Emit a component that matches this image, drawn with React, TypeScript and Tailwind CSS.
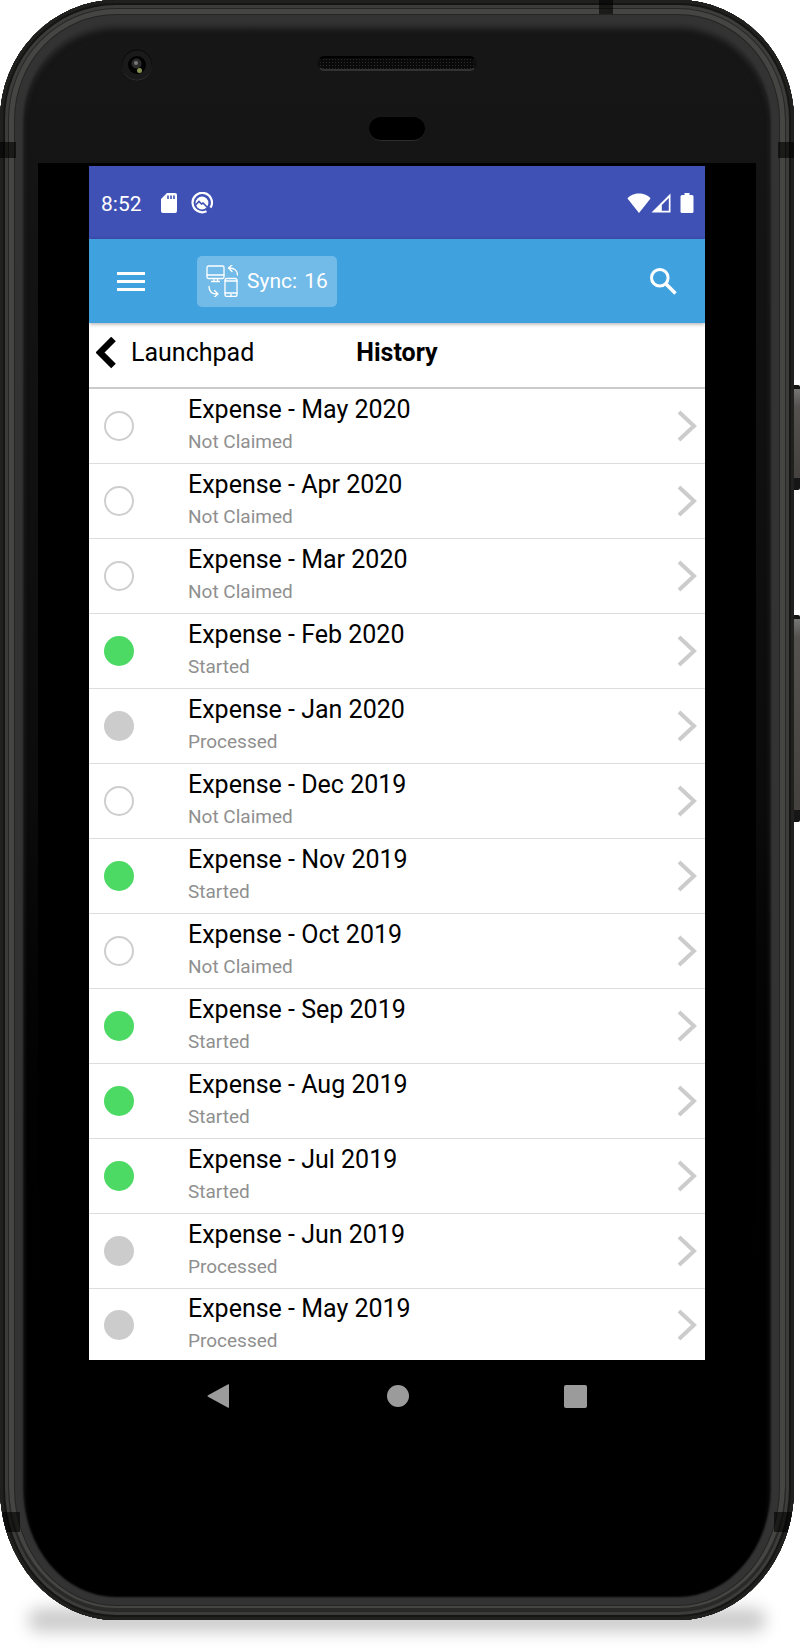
type Status = "Not Claimed" | "Started" | "Processed";

interface Expense {
  month: string;
  status: Status;
}

const expenses: Expense[] = [
  { month: "May 2020", status: "Not Claimed" },
  { month: "Apr 2020", status: "Not Claimed" },
  { month: "Mar 2020", status: "Not Claimed" },
  { month: "Feb 2020", status: "Started" },
  { month: "Jan 2020", status: "Processed" },
  { month: "Dec 2019", status: "Not Claimed" },
  { month: "Nov 2019", status: "Started" },
  { month: "Oct 2019", status: "Not Claimed" },
  { month: "Sep 2019", status: "Started" },
  { month: "Aug 2019", status: "Started" },
  { month: "Jul 2019", status: "Started" },
  { month: "Jun 2019", status: "Processed" },
  { month: "May 2019", status: "Processed" },
];

const dotStyles: Record<Status, string> = {
  "Not Claimed": "border-2 border-[#cecece] bg-white",
  Started: "bg-[#4cd964]",
  Processed: "bg-[#cccccc]",
};

function StatusBar() {
  return (
    <div className="flex h-[73px] items-center bg-[#3f51b5] pr-[11px] pl-3 text-white">
      <span className="pt-0.5 text-[21px] leading-6">8:52</span>
      <svg className="ml-[19px] h-5 w-4" viewBox="0 0 16 20" fill="currentColor">
        <path d="M6 0h8a2 2 0 0 1 2 2v16a2 2 0 0 1-2 2H2a2 2 0 0 1-2-2V6z" />
        <path d="M7 2.500v3.500M10 2.500v3.500M13 2.500v3.500" stroke="#3f51b5" strokeWidth="1.600" />
      </svg>
      <svg className="ml-[14px] size-[22px]" viewBox="0 0 22 22" fill="none">
        <path
          d="M15.500 19.300A9.700 9.700 0 1 1 19.500 15.700"
          stroke="#fff"
          strokeWidth="2.200"
        />
        <circle cx="11" cy="11" r="6.400" fill="#fff" />
        <path
          d="M4 13.500l4-4 2.500 2.500 1.500-1L19 18"
          stroke="#3f51b5"
          strokeWidth="1.600"
        />
      </svg>
      <div className="ml-auto flex items-center">
        <svg className="h-5 w-6" viewBox="0 0 24 20" fill="currentColor">
          <path d="M12 20L0.500 5.500C3 2 7.500 0.500 12 0.500S21 2 23.500 5.500z" />
        </svg>
        <svg className="h-5 w-5" viewBox="0 0 20 20" fill="none">
          <path d="M19.500 0.500v19H0.500z" fill="#fff" />
          <path d="M17.800 5v12.800h-7V12z" fill="#3f51b5" />
        </svg>
        <svg className="ml-[9px] h-5 w-[14px]" viewBox="0 0 14 20" fill="currentColor">
          <path d="M4.500 0h5v2H12a1.500 1.500 0 0 1 1.500 1.500v15A1.500 1.500 0 0 1 12 20H2A1.500 1.500 0 0 1 .5 18.500v-15A1.500 1.500 0 0 1 2 2h2.500z" />
        </svg>
      </div>
    </div>
  );
}

function AppBar() {
  return (
    <header className="relative flex h-[84px] items-center bg-[#40a1df] px-7 text-white shadow-[0_1px_4px_rgba(0,0,0,0.35)]">
      <button aria-label="Menu" className="flex w-7 flex-col gap-[5px]">
        <span className="h-[3px] bg-white" />
        <span className="h-[3px] bg-white" />
        <span className="h-[3px] bg-white" />
      </button>
      <button className="ml-[52px] flex h-[51px] items-center gap-[9px] rounded-[5px] bg-[#72bae7] px-[9px]">
        <svg
          className="size-8"
          viewBox="0 0 32 32"
          fill="none"
          stroke="currentColor"
          strokeWidth="1.300"
          strokeLinecap="round"
        >
          <rect x="1" y="1" width="17" height="12.500" rx="1.500" />
          <path d="M1 10h17M8 13.500v2.500M11.500 13.500v2.500M5.500 16.500h8" />
          <rect x="19" y="13.500" width="12" height="18" rx="2" />
          <path d="M19 16h12M19 28h12M24.500 30h1" />
          <path d="M31.500 10c0-4-3-7-8.500-7M26 0l-3.500 3L26 6.500" />
          <path d="M3 21.500c0 4.500 3 7.500 8.500 7.500M8.500 25.500l3.500 3.500-3.500 3" />
        </svg>
        <span className="text-[21px] leading-6">
          Sync: <span className="pl-0.5">16</span>
        </span>
      </button>
      <button aria-label="Search" className="ml-auto">
        <svg
          className="size-7"
          viewBox="0 0 28 28"
          fill="none"
          stroke="currentColor"
          strokeWidth="3"
        >
          <circle cx="10.800" cy="10.800" r="8.300" />
          <path d="M17 17l9.500 9.500" strokeWidth="3.600" />
        </svg>
      </button>
    </header>
  );
}

function TitleBar() {
  return (
    <div className="grid h-[66px] grid-cols-3 items-center border-b-2 border-[#cbcbcb] px-[7px] pb-1">
      <a href="#launchpad" className="flex items-center gap-[15px] text-black">
        <svg className="h-8 w-5" viewBox="0 0 20 32" fill="none">
          <path d="M17.500 2L4 15.500 17.500 29" stroke="#000" strokeWidth="6.500" />
        </svg>
        <span className="text-[25px] leading-8">Launchpad</span>
      </a>
      <h1 className="text-center text-[25px] leading-8 font-bold">History</h1>
    </div>
  );
}

function ExpenseRow({ month, status }: Expense) {
  return (
    <li className="border-b border-[#dddddd] last:border-b-0 last:*:h-[71px]">
      <a href="#expense" className="flex h-[74px] items-center pr-2 pl-[15px]">
        <span className={`size-[30px] shrink-0 rounded-full ${dotStyles[status]}`} />
        <span className="ml-[54px] flex-1 pb-0.5">
          <span className="block text-[25px] leading-8 text-black">
            Expense - {month}
          </span>
          <span className="block pt-0.5 text-[19px] leading-7 text-[#8f8f8f]">
            {status}
          </span>
        </span>
        <svg className="h-8 w-5" viewBox="0 0 20 32" fill="none">
          <path d="M2 2l15 14L2 30" stroke="#cccccc" strokeWidth="4" />
        </svg>
      </a>
    </li>
  );
}

function NavBar() {
  return (
    <nav className="flex h-[72px] items-center justify-between px-[118px]">
      <button aria-label="Back">
        <svg className="h-6 w-6" viewBox="0 0 24 24" fill="#9b9b9b">
          <path d="M22 1v22a.8.8 0 0 1-1.300.6L1 12.800a1 1 0 0 1 0-1.600L20.700.4a.8.8 0 0 1 1.300.6z" />
        </svg>
      </button>
      <button aria-label="Home" className="size-[22px] rounded-full bg-[#9b9b9b]" />
      <button aria-label="Recent apps" className="size-[23px] rounded-xs bg-[#9b9b9b]" />
    </nav>
  );
}

function Bezel() {
  return (
    <div className="relative flex h-[163px] flex-col items-center pt-14">
      <div className="absolute top-[49px] left-[121px] size-8">
        <svg viewBox="0 0 32 32">
          <circle cx="16" cy="16.500" r="15" fill="#363636" />
          <circle cx="16" cy="15.500" r="15" fill="#0a0a0a" />
          <circle cx="16" cy="16" r="14.500" fill="#1a1a1a" />
          <circle cx="16" cy="16" r="9" fill="#020202" />
          <circle cx="15.500" cy="14.500" r="5" fill="#2b2b2b" />
          <circle cx="15" cy="14" r="2" fill="#777" />
          <circle cx="18.500" cy="21.500" r="2.500" fill="#8a9250" />
        </svg>
      </div>
      <div className="h-[15px] w-40 rounded-full border-2 border-t-black border-r-[#111] border-b-[#333] border-l-[#111] bg-[#0a0a0a] bg-[radial-gradient(#2c2c2c_1px,transparent_1px)] bg-size-[3px_3px]" />
      <div className="mt-[46px] h-6 w-14 rounded-full border-b border-[#2c2c2c] bg-black" />
    </div>
  );
}

export default function App() {
  return (
    <div className="min-h-screen overflow-hidden bg-white font-[Roboto,sans-serif]">
      <div className="relative pr-[6px]">
        {/* power and volume keys */}
        <div className="absolute top-[385px] right-0 h-[105px] w-2 rounded-r-xs border-t-4 border-b-[12px] border-[#161616] bg-linear-to-b from-[#777] via-[#55524f] via-20% to-[#44413f]" />
        <div className="absolute top-[615px] right-0 h-[207px] w-2 rounded-r-xs border-t-4 border-b-[12px] border-[#161616] bg-linear-to-b from-[#777] via-[#55524f] via-10% to-[#44413f]" />

        <div className="relative z-10 overflow-hidden rounded-t-[116px_120px] rounded-b-[116px_132px] bg-linear-to-b from-[#171717] via-[#0b0b0b] to-black to-90% pb-[188px] shadow-[inset_0_0_0_3px_#20201f,inset_0_0_0_5px_#151514,inset_0_0_0_8px_#3c3c3a,inset_0_0_0_9px_#272726,inset_0_-3px_0_9px_#2a2a29,inset_0_0_0_14px_#454543,inset_0_0_0_15px_#252524,inset_0_0_2px_23px_#333,inset_0_6px_6px_22px_#333]">
          <span className="absolute top-0 left-[599px] h-[14px] w-[14px] bg-black/60" />
          <span className="absolute top-[142px] left-0 h-4 w-4 bg-black/60" />
          <span className="absolute top-[142px] right-0 h-4 w-4 bg-black/60" />
          <span className="absolute bottom-[88px] left-0 h-5 w-5 bg-black/60" />
          <span className="absolute right-0 bottom-[88px] h-5 w-5 bg-black/60" />

          <Bezel />

          <div className="mx-[38px] bg-black px-[51px] pt-[3px]">
            <main className="bg-white">
              <StatusBar />
              <AppBar />
              <TitleBar />
              <ul>
                {expenses.map((e) => (
                  <ExpenseRow key={e.month} {...e} />
                ))}
              </ul>
            </main>
            <NavBar />
          </div>
        </div>

        {/* ground shadow */}
        <div className="mx-7 -mt-3 h-6 rounded-full bg-black/20 blur-[8px]" />
      </div>
    </div>
  );
}
